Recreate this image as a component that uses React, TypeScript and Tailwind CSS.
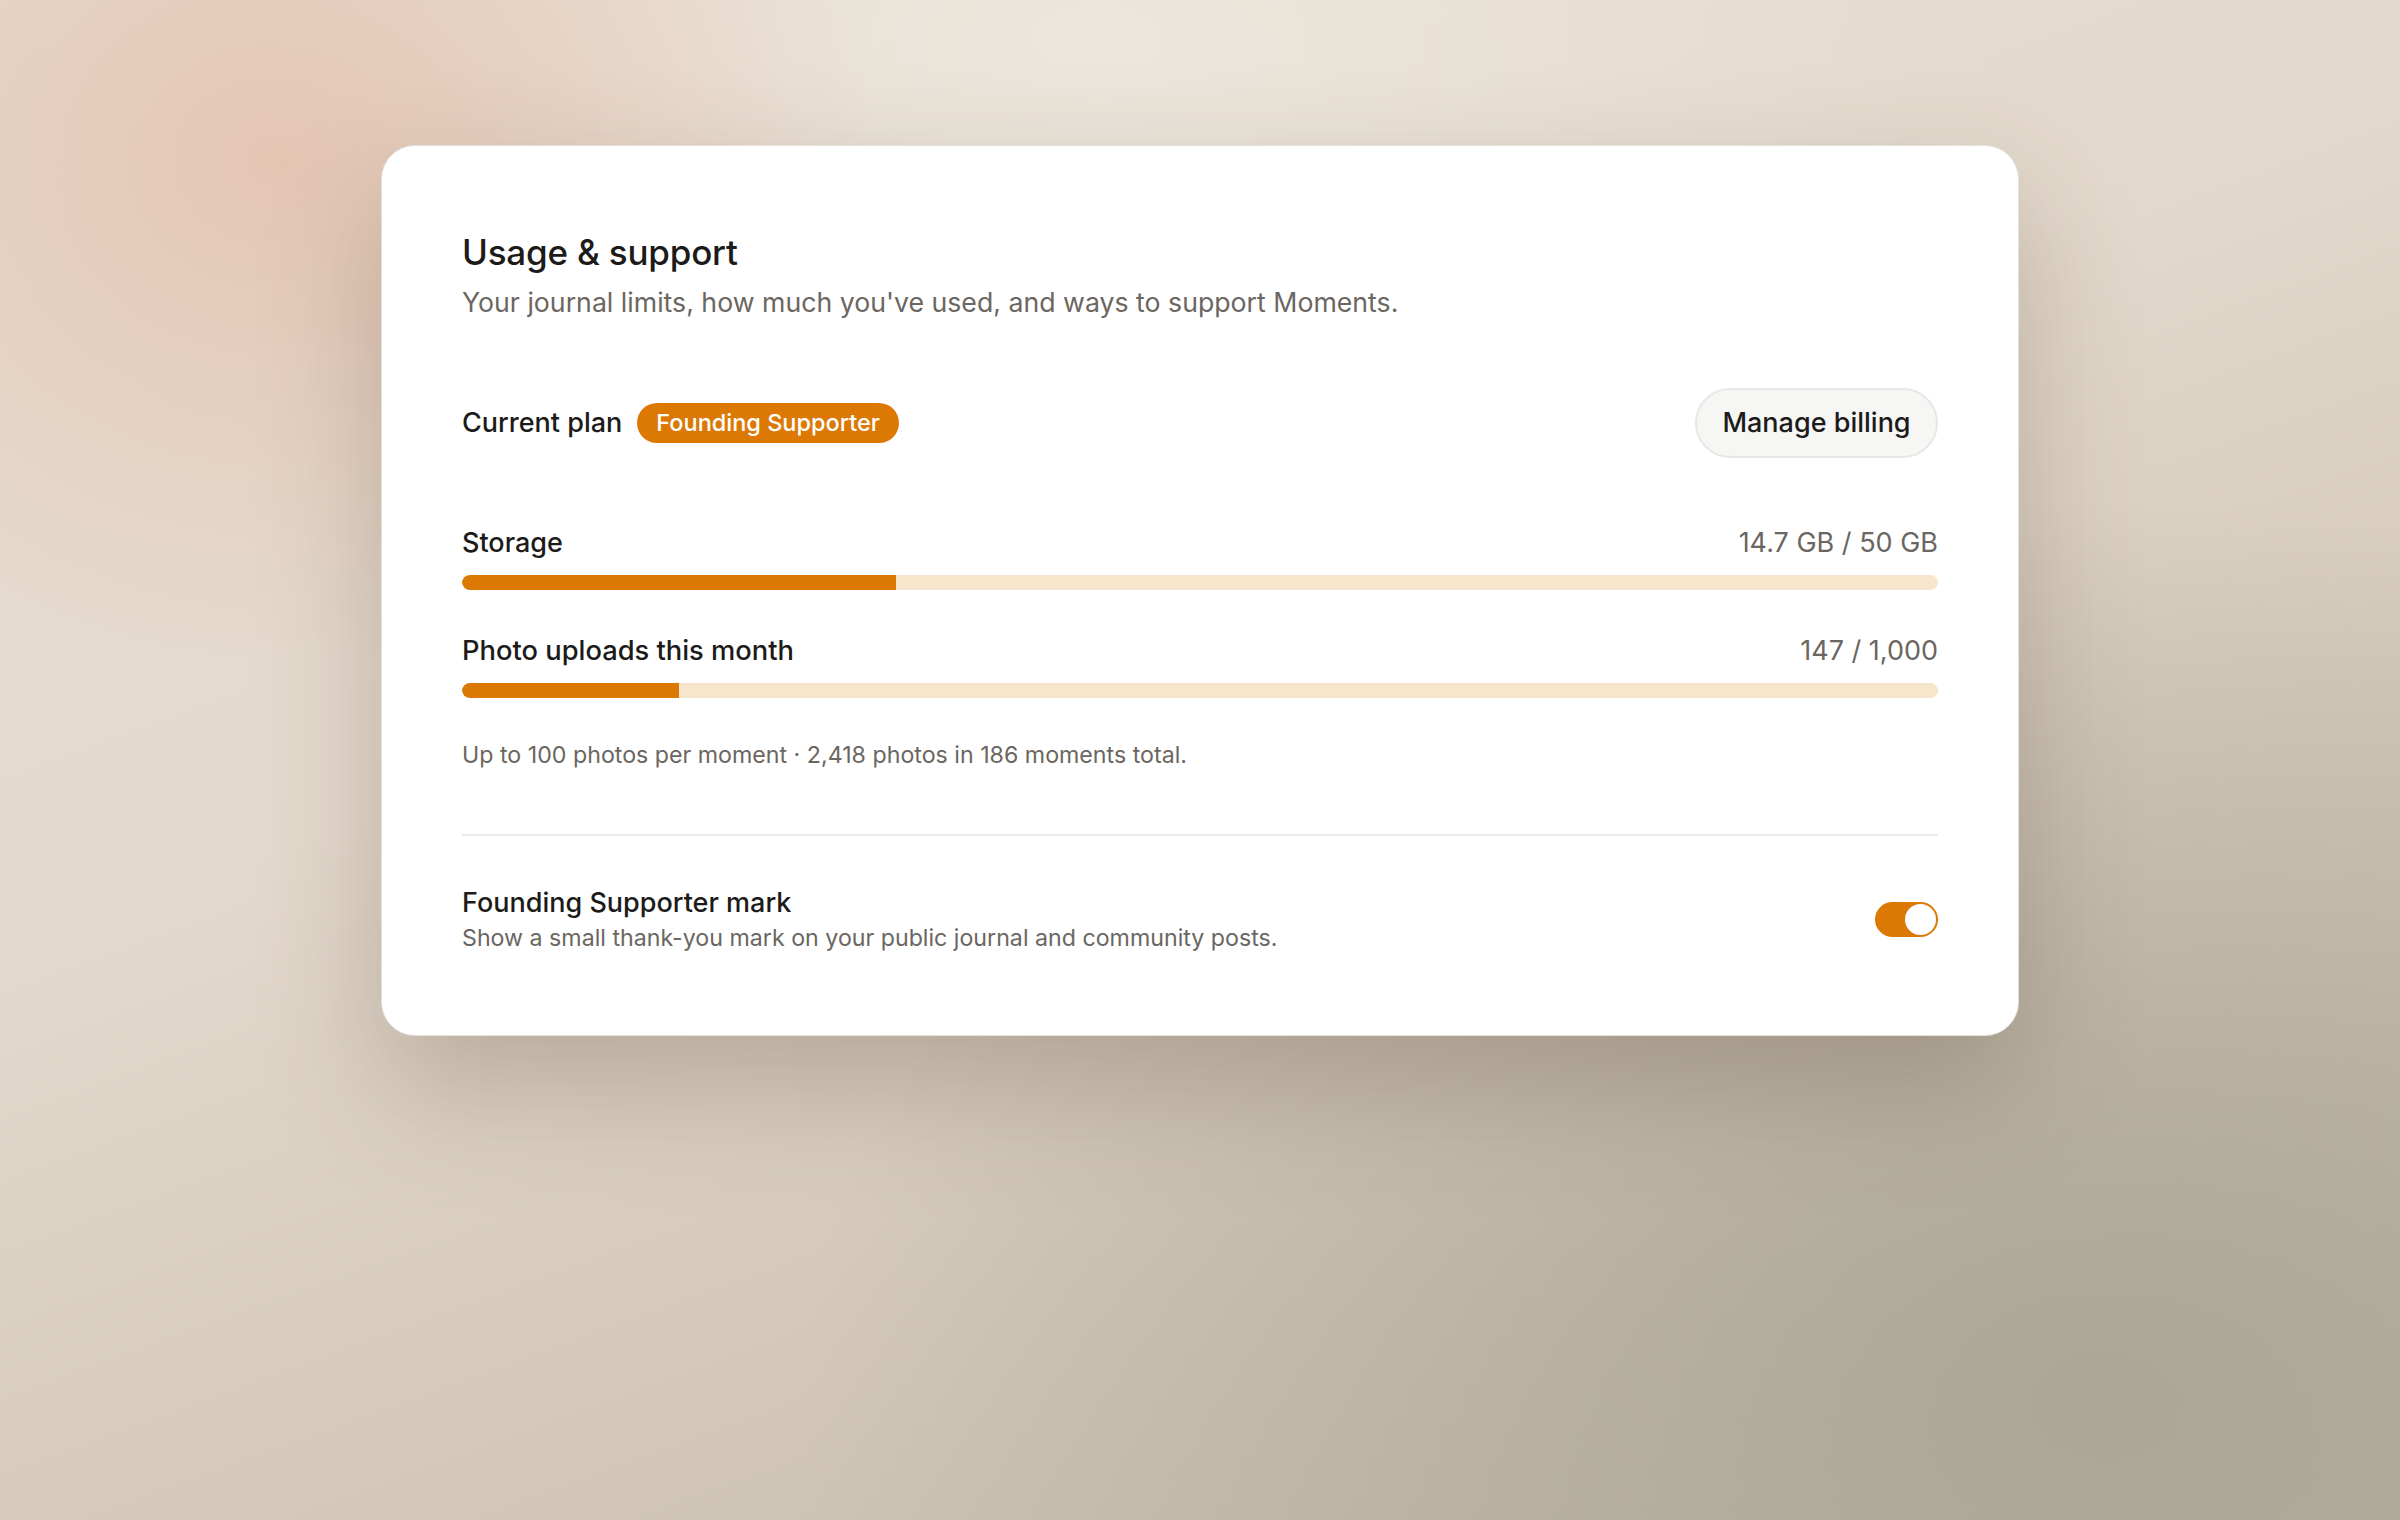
import React from "react";

function Bar({ pct }: { pct: number }) {
  return (
    <div className="h-[15px] w-full rounded-full bg-[#f7e5cc] overflow-hidden">
      <div className="h-full bg-[#dc7905] rounded-l-full" style={{ width: `${pct}%` }} />
    </div>
  );
}

export default function App() {
  return (
    <div
      className="w-[2400px] h-[1520px] overflow-hidden bg-[radial-gradient(ellipse_600px_500px_at_280px_160px,rgba(228,190,170,0.75),transparent),radial-gradient(ellipse_1300px_900px_at_2100px_1400px,rgba(170,165,148,0.95),transparent),radial-gradient(ellipse_900px_500px_at_1100px_40px,rgba(236,230,220,1),transparent),linear-gradient(160deg,#e7ddd0_0%,#e3d9cc_40%,#d2c7b8_70%,#bcb5a5_100%)] pt-[145px] pl-[381px] [font-family:Inter,'Liberation_Sans',sans-serif]"
    >
      <div className="w-[1638px] h-[891px] rounded-[34px] bg-white border border-[#e3e1dd] shadow-[0_50px_120px_rgba(90,70,50,0.28)] px-[80px] pt-[84px]">
        <h1 className="text-[35px] leading-[44px] font-medium text-[#1c1b1a] tracking-[-0.2px]">Usage &amp; support</h1>
        <p className="mt-[8px] text-[26.7px] leading-[40px] text-[#6b6661]">
          Your journal limits, how much you've used, and ways to support Moments.
        </p>

        <div className="mt-[66px] flex items-center justify-between h-[70px]">
          <div className="flex items-center gap-[15px]">
            <span className="text-[27px] font-medium text-[#1c1b1a]">Current plan</span>
            <span className="h-[40px] px-[19px] rounded-full bg-[#dc7905] text-white text-[23.5px] font-medium flex items-center">
              Founding Supporter
            </span>
          </div>
          <button className="h-[70px] w-[243px] rounded-full bg-[#f6f6f5] border-2 border-[#e8e7e5] text-[27px] font-medium text-[#1c1b1a]">
            Manage billing
          </button>
        </div>

        <div className="mt-[68px]">
          <div className="flex items-center justify-between h-[34px]">
            <span className="text-[27px] font-medium text-[#1c1b1a]">Storage</span>
            <span className="text-[27px] text-[#6b6661]">14.7 GB / 50 GB</span>
          </div>
          <div className="mt-[15px]">
            <Bar pct={29.4} />
          </div>
        </div>

        <div className="mt-[44px]">
          <div className="flex items-center justify-between h-[34px]">
            <span className="text-[27.3px] font-medium text-[#1c1b1a]">Photo uploads this month</span>
            <span className="text-[27px] text-[#6b6661]">147 / 1,000</span>
          </div>
          <div className="mt-[15px]">
            <Bar pct={14.7} />
          </div>
        </div>

        <p className="mt-[42px] text-[23.2px] leading-[30px] text-[#6b6661]">
          Up to 100 photos per moment · 2,418 photos in 186 moments total.
        </p>

        <div className="mt-[64px] h-[2px] bg-[#ebeae8]" />

        <div className="mt-[49px] flex items-center justify-between">
          <div>
            <div className="text-[27px] leading-[36px] font-medium text-[#1c1b1a]">Founding Supporter mark</div>
            <div className="mt-[1px] text-[23.2px] leading-[32px] text-[#6b6661]">
              Show a small thank-you mark on your public journal and community posts.
            </div>
          </div>
          <div className="w-[63px] h-[35px] rounded-full bg-[#dc7905] relative">
            <div className="absolute right-[2px] top-[2px] w-[31px] h-[31px] rounded-full bg-white" />
          </div>
        </div>
      </div>
    </div>
  );
}
